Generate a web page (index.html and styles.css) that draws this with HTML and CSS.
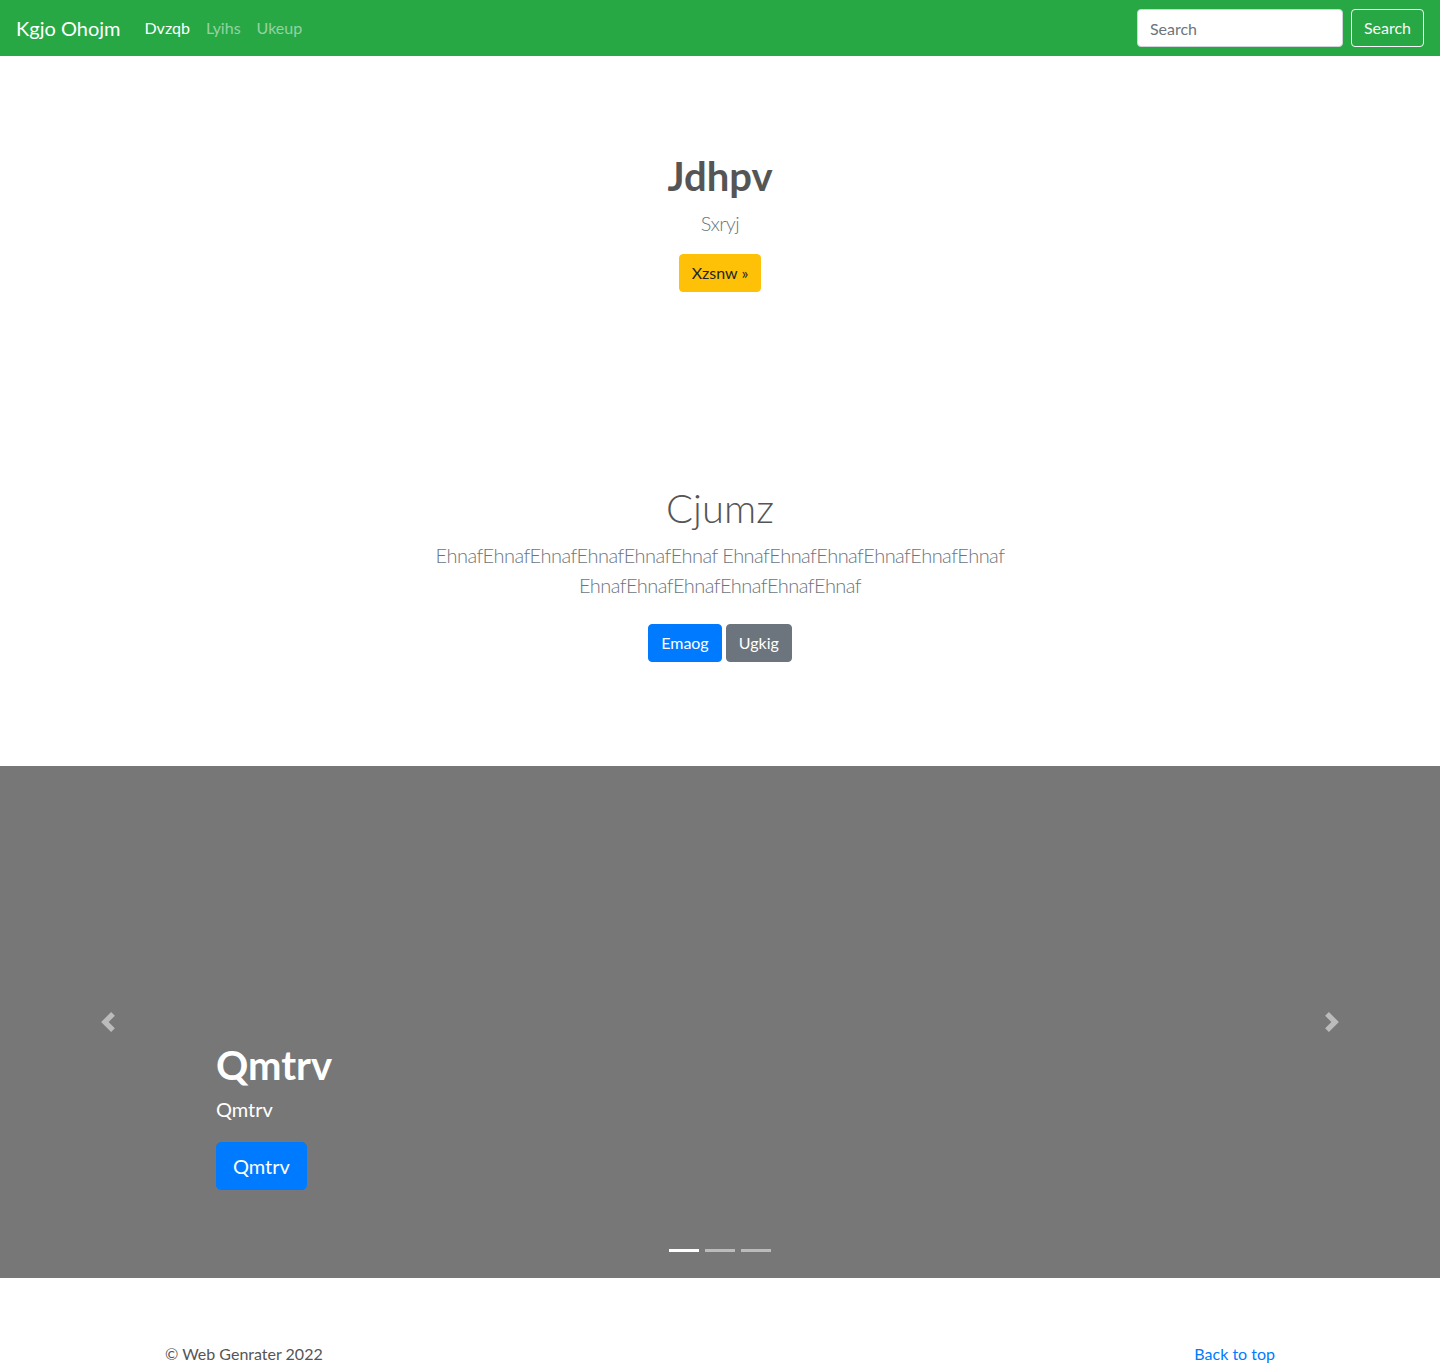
FILE: index.html
```html
<!DOCTYPE html>
<html lang="en">
<head>
<meta charset="utf-8">
<title>Kgjo Ohojm</title>
<link rel="stylesheet" href="styles.css">
</head>
<body>
<nav class="navbar">
  <a class="brand" href="#">Kgjo Ohojm</a>
  <ul class="nav">
    <li><a class="nav-link active" href="#">Dvzqb</a></li>
    <li><a class="nav-link" href="#">Lyihs</a></li>
    <li><a class="nav-link" href="#">Ukeup</a></li>
  </ul>
  <form class="search-form">
    <input class="search-input" type="text" placeholder="Search">
    <button class="btn btn-outline-light" type="button">Search</button>
  </form>
</nav>

<main>
  <section class="jumbo">
    <div class="jumbo-inner">
      <h1 class="heading heading-bold">Jdhpv</h1>
      <p class="lead muted">Sxryj</p>
      <p class="last"><a class="btn btn-warning" href="#">Xzsnw »</a></p>
    </div>
  </section>

  <section class="jumbo">
    <div class="jumbo-inner">
      <h1 class="heading heading-light">Cjumz</h1>
      <p class="lead muted">EhnafEhnafEhnafEhnafEhnafEhnaf EhnafEhnafEhnafEhnafEhnafEhnaf EhnafEhnafEhnafEhnafEhnafEhnaf</p>
      <p class="last"><a class="btn btn-primary my" href="#">Emaog</a> <a class="btn btn-secondary my" href="#">Ugkig</a></p>
    </div>
  </section>

  <div class="carousel">
    <div class="carousel-item"></div>
    <a class="control control-prev" href="#">
      <svg width="20" height="20" viewBox="0 0 8 8" fill="#fff"><path d="M5.25 0l-4 4 4 4 1.5-1.5L4.25 4l2.5-2.5L5.25 0z"/></svg>
    </a>
    <a class="control control-next" href="#">
      <svg width="20" height="20" viewBox="0 0 8 8" fill="#fff"><path d="M2.75 0l-1.5 1.5L3.75 4l-2.5 2.5L2.75 8l4-4-4-4z"/></svg>
    </a>
    <div class="caption">
      <h1 class="caption-title">Qmtrv</h1>
      <p class="caption-text">Qmtrv</p>
      <p class="caption-action"><a class="btn btn-primary btn-lg" href="#">Qmtrv</a></p>
    </div>
    <ol class="indicators">
      <li class="active"></li>
      <li></li>
      <li></li>
    </ol>
  </div>

  <footer class="footer">
    <p>© Web Genrater 2022</p>
    <p><a class="link" href="#">Back to top</a></p>
  </footer>
</main>
</body>
</html>
```

FILE: styles.css
```css
* { box-sizing: border-box; }

html, body {
  margin: 0;
  padding: 0;
}

body {
  font-family: Lato, "Open Sans", "Liberation Sans", sans-serif;
  font-size: 16px;
  line-height: 1.5;
  color: #555;
  background: #fff;
}

a { text-decoration: none; }

/* Navbar */
.navbar {
  display: flex;
  align-items: center;
  height: 56px;
  padding: 8px 16px;
  background: #28a745;
}

.brand {
  font-size: 20px;
  line-height: 30px;
  padding: 5px 0;
  margin-right: 16px;
  color: #fff;
}

.nav {
  display: flex;
  list-style: none;
  margin: 0;
  padding: 0;
  flex: 1;
}

.nav-link {
  display: block;
  padding: 8px;
  color: rgba(255, 255, 255, 0.5);
}

.nav-link.active { color: #fff; }

.search-form {
  display: flex;
  align-items: center;
}

.search-input {
  width: 206px;
  height: 38px;
  padding: 6px 12px;
  margin-right: 8px;
  font-family: inherit;
  font-size: 16px;
  color: #495057;
  background: #fff;
  border: 1px solid #ced4da;
  border-radius: 4px;
}

.search-input::placeholder { color: #6c757d; }

/* Buttons */
.btn {
  display: inline-block;
  font-family: inherit;
  font-size: 16px;
  line-height: 24px;
  padding: 6px 12px;
  border: 1px solid transparent;
  border-radius: 4px;
  cursor: pointer;
  vertical-align: middle;
}

.btn-outline-light {
  color: #f8f9fa;
  background: transparent;
  border-color: #f8f9fa;
}

.btn-warning {
  color: #212529;
  background: #ffc107;
  border-color: #ffc107;
}

.btn-primary {
  color: #fff;
  background: #007bff;
  border-color: #007bff;
}

.btn-secondary {
  color: #fff;
  background: #6c757d;
  border-color: #6c757d;
}

.btn-lg {
  font-size: 20px;
  line-height: 30px;
  padding: 8px 16px;
  border-radius: 5px;
}

.my { margin: 8px 0; }

/* Jumbotron sections */
.jumbo {
  padding: 96px 0;
  text-align: center;
}

.jumbo-inner {
  max-width: 640px;
  margin: 0 auto;
  padding: 0 15px;
}

.heading {
  margin: 0 0 8px;
  font-size: 40px;
  line-height: 48px;
  color: #555;
}

.heading-bold { font-weight: 700; }
.heading-light { font-weight: 300; }

.lead {
  margin: 0 0 16px;
  font-size: 20px;
  line-height: 30px;
  font-weight: 300;
  letter-spacing: -0.55px;
}

.muted { color: #6c757d; }

.last { margin: 0; }

/* Carousel */
.carousel {
  position: relative;
  height: 512px;
  margin-bottom: 64px;
  background: #777;
}

.carousel-item {
  height: 100%;
}

.control {
  position: absolute;
  top: 0;
  bottom: 0;
  width: 15%;
  display: flex;
  align-items: center;
  justify-content: center;
  opacity: 0.5;
}

.control-prev { left: 0; }
.control-next { right: 0; }

.caption {
  position: absolute;
  left: 15%;
  right: 15%;
  bottom: 52px;
  padding: 20px 0;
  color: #fff;
  text-align: left;
}

.caption-title {
  margin: 0 0 8px;
  font-size: 40px;
  line-height: 48px;
  font-weight: 700;
}

.caption-text {
  margin: 0 0 21px;
  font-size: 20px;
  line-height: 24px;
}

.caption-action { margin: 0 0 16px; }

.indicators {
  position: absolute;
  left: 0;
  right: 0;
  bottom: 0;
  display: flex;
  justify-content: center;
  list-style: none;
  margin: 0 0 16px;
  padding: 0;
}

.indicators li {
  width: 30px;
  height: 3px;
  margin: 10px 3px;
  background: #fff;
  opacity: 0.5;
}

.indicators li.active { opacity: 1; }

/* Footer */
.footer {
  max-width: 1140px;
  margin: 0 auto;
  padding: 0 15px;
  display: flex;
  justify-content: space-between;
}

.footer p { margin: 0 0 16px; }

.link { color: #007bff; }
```
